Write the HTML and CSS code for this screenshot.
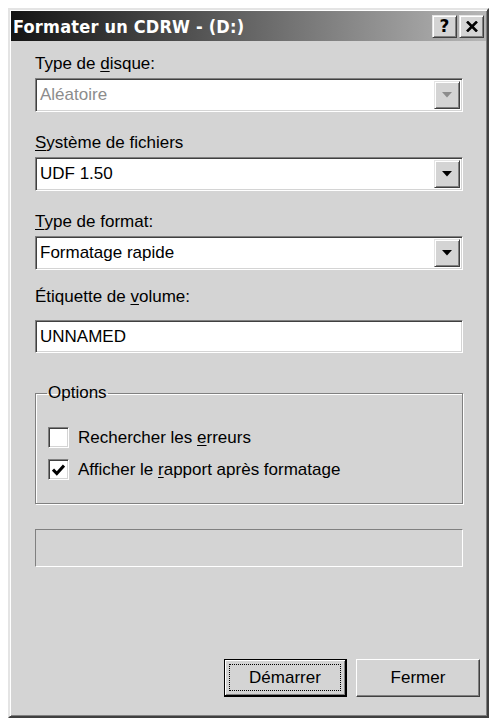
FILE: index.html
```html
<!DOCTYPE html>
<html lang="fr">
<head>
    <meta charset="UTF-8">
    <title>Formater un CDRW - (D:)</title>
    <link rel="stylesheet" href="styles.css">
</head>
<body>
    <div class="window">
        <div class="titlebar">
            <span class="title">Formater un CDRW - (D:)</span>
            <div class="caption-buttons">
                <button class="caption-btn help">?</button>
                <button class="caption-btn close">
                    <svg width="12" height="11" viewBox="0 0 12 11">
                        <path d="M1 0.5 L11 10.5 M11 0.5 L1 10.5" stroke="#000" stroke-width="2.6" fill="none"/>
                    </svg>
                </button>
            </div>
        </div>
        <div class="content">
            <div class="field">
                <div class="label">Type de <u>d</u>isque:</div>
                <div class="combo disabled">
                    <span class="combo-text">Aléatoire</span>
                    <span class="combo-arrow">
                        <svg width="10" height="6" viewBox="0 0 10 6"><path d="M0 0 H10 L5 5.5 Z" fill="#8c8c8c"/></svg>
                    </span>
                </div>
            </div>
            <div class="field">
                <div class="label"><u>S</u>ystème de fichiers</div>
                <div class="combo">
                    <span class="combo-text">UDF 1.50</span>
                    <span class="combo-arrow">
                        <svg width="10" height="6" viewBox="0 0 10 6"><path d="M0 0 H10 L5 5.5 Z" fill="#000"/></svg>
                    </span>
                </div>
            </div>
            <div class="field">
                <div class="label"><u>T</u>ype de format:</div>
                <div class="combo">
                    <span class="combo-text">Formatage rapide</span>
                    <span class="combo-arrow">
                        <svg width="10" height="6" viewBox="0 0 10 6"><path d="M0 0 H10 L5 5.5 Z" fill="#000"/></svg>
                    </span>
                </div>
            </div>
            <div class="field last">
                <div class="label">Étiquette de <u>v</u>olume:</div>
                <div class="textbox">UNNAMED</div>
            </div>

            <fieldset class="group">
                <legend>Options</legend>
                <div class="check">
                    <span class="box"></span>
                    <span>Rechercher les <u>e</u>rreurs</span>
                </div>
                <div class="check">
                    <span class="box">
                        <svg width="13" height="12" viewBox="0 0 13 12"><path d="M1 5.5 L4.8 9.5 L12 1.5" stroke="#000" stroke-width="3" fill="none"/></svg>
                    </span>
                    <span>Afficher le <u>r</u>apport après formatage</span>
                </div>
            </fieldset>

            <div class="progress"></div>

            <div class="buttons">
                <button class="button default"><span class="focus">Démarrer</span></button>
                <button class="button">Fermer</button>
            </div>
        </div>
    </div>
</body>
</html>
```

FILE: styles.css
```css
body {
    margin: 0;
    background: #fff;
    font-family: "Liberation Sans", Arial, sans-serif;
    font-size: 17px;
    color: #000;
}
.window {
    box-sizing: border-box;
    width: 481px;
    height: 710px;
    margin: 8px 0 0 8px;
    padding: 1px;
    background: #d4d4d4;
    border: 2px solid;
    border-color: #e4e4e4 #404040 #404040 #e4e4e4;
    box-shadow: inset 1px 1px 0 #fff, inset -1px -1px 0 #808080;
    display: flex;
    flex-direction: column;
}
.titlebar {
    height: 30px;
    display: flex;
    align-items: center;
    justify-content: space-between;
    background: linear-gradient(to right, #141414, #3c3c3c 25%, #b6b6b6);
    padding: 0 2px 0 2px;
}
.title {
    color: #fff;
    font-family: "DejaVu Sans Condensed", "DejaVu Sans", sans-serif;
    font-weight: bold;
    font-size: 18px;
    letter-spacing: 0.2px;
}
.caption-buttons {
    display: flex;
    gap: 2px;
}
.caption-btn {
    box-sizing: border-box;
    width: 25px;
    height: 23px;
    padding: 0;
    background: #d4d4d4;
    border: 1px solid;
    border-color: #e4e4e4 #404040 #404040 #e4e4e4;
    box-shadow: inset 1px 1px 0 #fff, inset -1px -1px 0 #808080;
    display: flex;
    align-items: center;
    justify-content: center;
}
.help {
    font-family: "DejaVu Sans", sans-serif;
    font-weight: bold;
    font-size: 17px;
    line-height: 1;
}
.content {
    flex: 1;
    display: flex;
    flex-direction: column;
    padding: 13px 6px 18px 24px;
}
.field {
    width: 428px;
    margin-bottom: 21px;
}
.field.last {
    margin-top: -4px;
    margin-bottom: 0;
}
.label {
    line-height: 20px;
    margin-bottom: 4px;
}
.last .label {
    margin-bottom: 13px;
}
u {
    text-underline-offset: 2px;
}
.combo, .textbox {
    box-sizing: border-box;
    height: 33px;
    background: #fff;
    border: 1px solid;
    border-color: #808080 #fff #fff #808080;
    box-shadow: inset 1px 1px 0 #404040, inset -1px -1px 0 #d4d4d4;
    display: flex;
    align-items: center;
    padding: 2px 2px 2px 4px;
}
.combo {
    height: 34px;
}
.combo-text {
    flex: 1;
}
.disabled .combo-text {
    color: #8c8c8c;
}
.combo-arrow {
    box-sizing: border-box;
    width: 26px;
    height: 100%;
    background: #d4d4d4;
    border: 1px solid;
    border-color: #e4e4e4 #404040 #404040 #e4e4e4;
    box-shadow: inset 1px 1px 0 #fff, inset -1px -1px 0 #808080;
    display: flex;
    align-items: center;
    justify-content: center;
}
.group {
    width: 428px;
    box-sizing: border-box;
    margin: 30px 0 0 0;
    padding: 24px 12px 23px 12px;
    border: 1px solid #808080;
    box-shadow: inset 1px 1px 0 #fff, 1px 1px 0 #fff;
}
.group legend {
    padding: 0 1px;
    margin-left: -1px;
    line-height: 20px;
}
.check {
    display: flex;
    align-items: center;
    gap: 9px;
    height: 21px;
}
.check + .check {
    margin-top: 11px;
}
.box {
    box-sizing: border-box;
    width: 21px;
    height: 21px;
    background: #fff;
    border: 1px solid;
    border-color: #808080 #fff #fff #808080;
    box-shadow: inset 1px 1px 0 #404040, inset -1px -1px 0 #d4d4d4;
    display: flex;
    align-items: center;
    justify-content: center;
}
.progress {
    width: 428px;
    box-sizing: border-box;
    height: 38px;
    margin-top: 25px;
    border: 1px solid;
    border-color: #808080 #fff #fff #808080;
}
.buttons {
    margin-top: auto;
    display: flex;
    justify-content: flex-end;
    gap: 9px;
}
.button {
    box-sizing: border-box;
    width: 124px;
    height: 38px;
    padding: 0;
    font-family: "Liberation Sans", Arial, sans-serif;
    font-size: 17px;
    color: #000;
    background: #d4d4d4;
    border: 1px solid;
    border-color: #fff #404040 #404040 #fff;
    box-shadow: inset -1px -1px 0 #808080;
}
.button.default {
    width: 123px;
    border: 1px solid #000;
    border-width: 1px 2px 2px 1px;
    box-shadow: inset 1px 1px 0 #fff, inset -1px -1px 0 #808080;
    padding: 4px;
    display: flex;
}
.focus {
    flex: 1;
    display: flex;
    align-items: center;
    justify-content: center;
    border: 1px dotted #000;
}
```
